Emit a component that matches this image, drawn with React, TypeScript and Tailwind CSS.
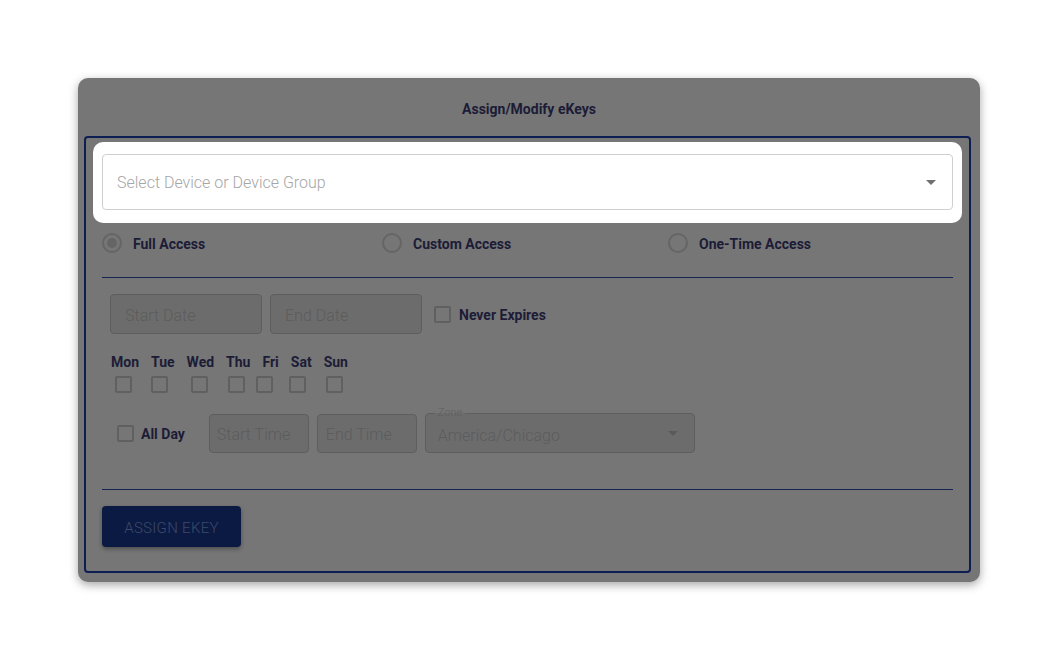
const days = ['Mon', 'Tue', 'Wed', 'Thu', 'Fri', 'Sat', 'Sun'];
const boxOffsets = ['ml-[13px]', 'ml-[19px]', 'ml-[23px]', 'ml-[20px]', 'ml-[11px]', 'ml-[16px]', 'ml-[20px]'];

function Radio({ checked }: { checked?: boolean }) {
  return (
    <span className="flex h-5 w-5 items-center justify-center rounded-full border-2 border-[#656565]">
      {checked && <span className="h-[10px] w-[10px] rounded-full bg-[#656565]" />}
    </span>
  );
}

function Box({ className = '' }: { className?: string }) {
  return <span className={`block h-[17px] w-[17px] rounded-[2px] border-2 border-[#606060] ${className}`} />;
}

function Field({ text, className = '' }: { text: string; className?: string }) {
  return (
    <div
      className={`flex items-center whitespace-nowrap rounded-[4px] border border-[#5e5e5e] bg-[#6c6c6c] pt-[3px] text-[16px] font-light text-[#5c5c5c] ${className}`}
    >
      {text}
    </div>
  );
}

function Caret({ color }: { color: string }) {
  return (
    <svg width="10" height="5" viewBox="0 0 10 5">
      <path d="M0 0 L10 0 L5 5 Z" fill={color} />
    </svg>
  );
}

export default function App() {
  return (
    <div className="flex h-[661px] w-full justify-center bg-white pt-[78px] font-['Roboto',sans-serif]">
      <div className="flex h-[504px] w-[902px] flex-col rounded-[10px] bg-[#767676] shadow-[0_3px_10px_rgba(0,0,0,0.35)]">
        <div className="flex h-[58px] items-center justify-center pt-[4px] text-[14px] font-bold text-[#1c1c36]">
          Assign/Modify eKeys
        </div>

        <div className="ml-[6px] mr-[9px] flex h-[437px] flex-col rounded-[4px] border-2 border-[#0d1f52]">
          <div className="mx-[7px] mt-[4px] rounded-[10px] bg-white px-[9px] pb-[13px] pt-[12px]">
            <div className="flex h-[56px] items-center justify-between rounded-[4px] border border-[#cfcfcf] px-[14px]">
              <span className="mt-[2px] text-[16px] font-light text-[#a6a6a6]">Select Device or Device Group</span>
              <span className="mr-[2px]">
                <Caret color="#707070" />
              </span>
            </div>
          </div>

          <div className="mx-[16px] mt-[8px] flex items-center">
            <div className="flex w-[280px] items-center">
              <Radio checked />
              <span className="ml-[11px] mt-[3px] text-[14px] font-bold text-[#1c1c36]">Full Access</span>
            </div>
            <div className="flex w-[286px] items-center">
              <Radio />
              <span className="ml-[11px] mt-[3px] text-[14px] font-bold text-[#1c1c36]">Custom Access</span>
            </div>
            <div className="flex items-center">
              <Radio />
              <span className="ml-[11px] mt-[3px] text-[14px] font-bold text-[#1c1c36]">One-Time Access</span>
            </div>
          </div>

          <div className="mx-[16px] mt-[22px] border-b border-[#14234f]" />

          <div className="ml-[24px] mt-[16px] flex items-center">
            <Field text="Start Date" className="h-[40px] w-[152px] px-[14px]" />
            <Field text="End Date" className="ml-[8px] h-[40px] w-[152px] px-[14px]" />
            <Box className="ml-[12px]" />
            <span className="ml-[8px] mt-[2px] text-[14px] font-bold text-[#1c1c36]">Never Expires</span>
          </div>

          <div className="ml-[25px] mt-[20px] flex gap-[12px] text-[14px] font-bold leading-[16px] text-[#1c1c36]">
            {days.map((d) => (
              <span key={d}>{d}</span>
            ))}
          </div>
          <div className="ml-[16px] mt-[6px] flex">
            {days.map((d, i) => (
              <Box key={d} className={boxOffsets[i]} />
            ))}
          </div>

          <div className="ml-[31px] mt-[20px] flex items-center">
            <Box />
            <span className="ml-[7px] mt-[2px] text-[14px] font-bold text-[#1c1c36]">All Day</span>
            <Field text="Start Time" className="ml-[24px] h-[39px] w-[100px] px-[7px]" />
            <Field text="End Time" className="ml-[8px] h-[39px] w-[100px] px-[8px]" />
            <div className="relative ml-[8px] flex h-[40px] w-[270px] items-center justify-between rounded-[4px] border border-[#5e5e5e] bg-[#6c6c6c] px-[12px] text-[16px] font-light text-[#5c5c5c]">
              <span className="absolute -top-[7px] left-[9px] bg-[linear-gradient(to_bottom,#767676_50%,#6c6c6c_50%)] px-[3px] text-[11px] leading-[12px] text-[#5e5e5e]">
                Zone
              </span>
              <span className="mt-[5px]">America/Chicago</span>
              <span className="mr-[4px]">
                <Caret color="#5a5a5a" />
              </span>
            </div>
          </div>

          <div className="mx-[16px] mt-[36px] border-b border-[#14234f]" />

          <div className="ml-[16px] mt-[16px]">
            <div className="flex h-[41px] w-[139px] items-center justify-center rounded-[4px] bg-[#0b1a43] pt-[3px] text-[15px] font-light tracking-[0.3px] text-[#3c4968] shadow-[0_2px_4px_rgba(0,0,0,0.35)]">
              ASSIGN EKEY
            </div>
          </div>
        </div>
      </div>
    </div>
  );
}
